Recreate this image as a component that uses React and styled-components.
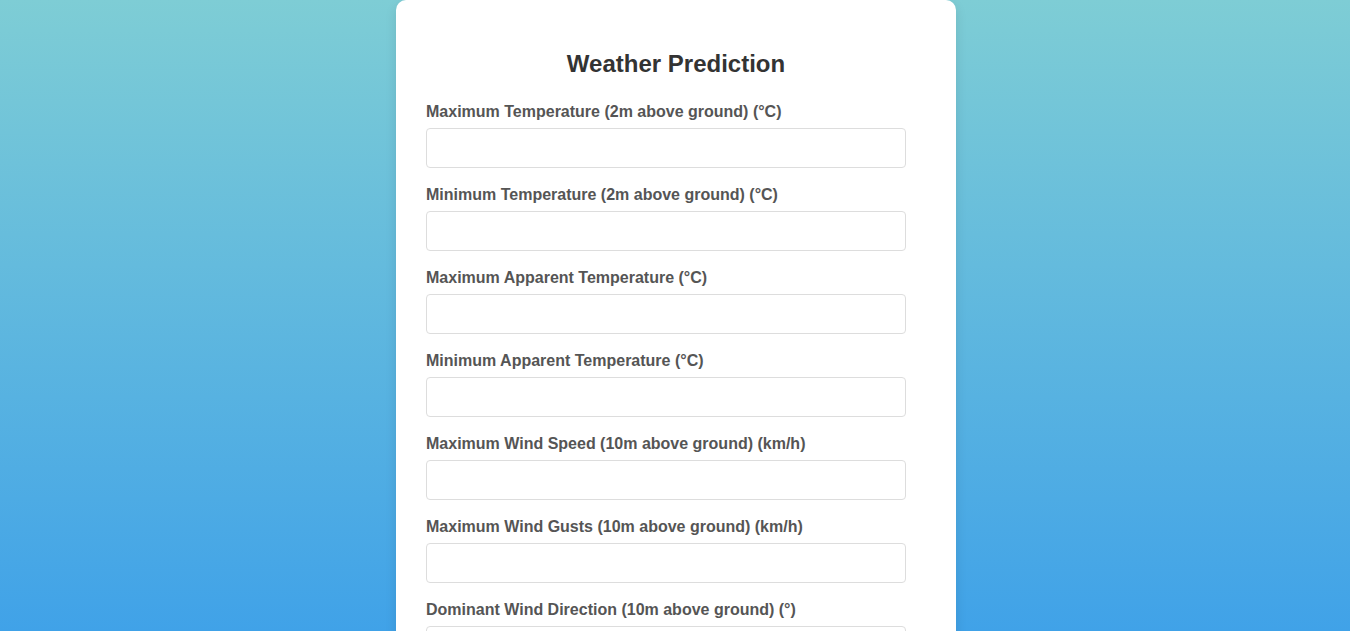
import React from "react";
import styled, { createGlobalStyle } from "styled-components";

const Global = createGlobalStyle`
  html, body { margin: 0; padding: 0; }
  html {
    background: linear-gradient(to bottom, #7ecdd5 0%, #40a2e8 100%) fixed;
    min-height: 100%;
  }
  body {
    font-family: "Liberation Sans", Arial, sans-serif;
    background: transparent;
  }
`;

const Page = styled.div`
  display: flex;
  justify-content: center;
  min-height: 100vh;
  padding-left: 2px;
`;

const Card = styled.form`
  width: 500px;
  padding: 30px;
  background: #ffffff;
  border-radius: 10px;
  box-shadow: 0 4px 12px rgba(0, 0, 0, 0.1);
  align-self: flex-start;
`;

const Title = styled.h2`
  margin: 20px 0 25px;
  text-align: center;
  font-size: 24px;
  line-height: 28px;
  font-weight: 700;
  color: #333333;
`;

const Field = styled.div`
  display: flex;
  flex-direction: column;
  margin-bottom: 18px;
`;

const Label = styled.label`
  font-size: 16px;
  line-height: 18px;
  font-weight: 700;
  color: #555555;
  margin-bottom: 7px;
`;

const Input = styled.input`
  box-sizing: border-box;
  width: 480px;
  height: 40px;
  padding: 10px;
  border: 1px solid #dddddd;
  border-radius: 4px;
  font-size: 16px;
  font-family: inherit;
  outline: none;
`;

const Button = styled.button`
  width: 480px;
  height: 44px;
  border: none;
  border-radius: 4px;
  background: #3fa2e8;
  color: #ffffff;
  font-size: 16px;
  font-weight: 700;
  font-family: inherit;
`;

const fields = [
  "Maximum Temperature (2m above ground) (°C)",
  "Minimum Temperature (2m above ground) (°C)",
  "Maximum Apparent Temperature (°C)",
  "Minimum Apparent Temperature (°C)",
  "Maximum Wind Speed (10m above ground) (km/h)",
  "Maximum Wind Gusts (10m above ground) (km/h)",
  "Dominant Wind Direction (10m above ground) (°)",
  "Precipitation Sum (mm)",
  "Sunshine Duration (h)",
];

export default function App() {
  return (
    <>
      <Global />
      <Page>
        <Card onSubmit={(e) => e.preventDefault()}>
          <Title>Weather Prediction</Title>
          {fields.map((f, i) => (
            <Field key={i}>
              <Label htmlFor={`f${i}`}>{f}</Label>
              <Input id={`f${i}`} type="number" />
            </Field>
          ))}
          <Button type="submit">Predict</Button>
        </Card>
      </Page>
    </>
  );
}
